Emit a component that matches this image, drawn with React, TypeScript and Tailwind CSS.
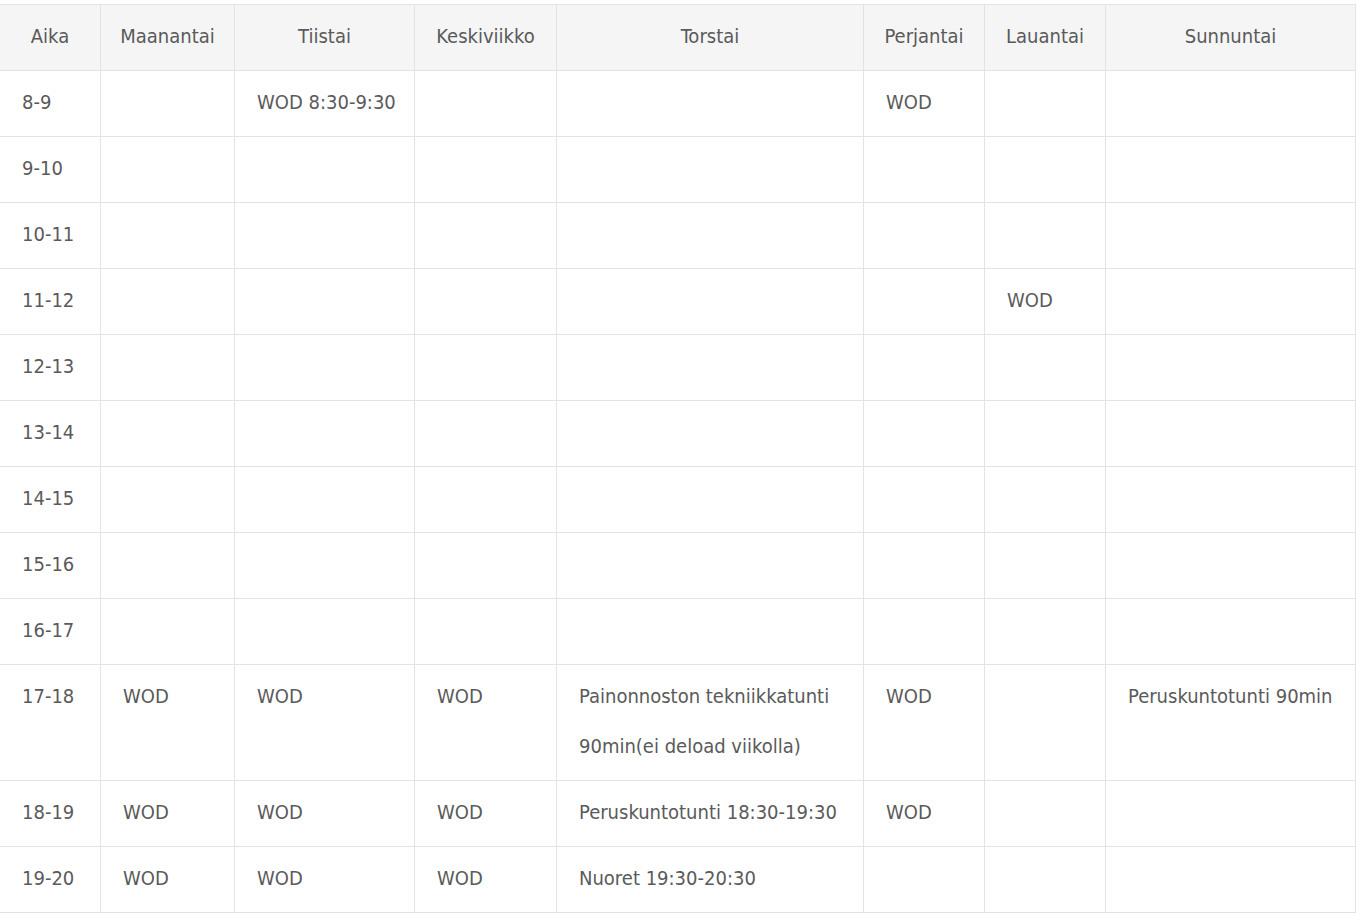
import React from 'react';

const days = ['Maanantai', 'Tiistai', 'Keskiviikko', 'Torstai', 'Perjantai', 'Lauantai', 'Sunnuntai'];

const colWidths = ['w-[101px]', 'w-[134px]', 'w-[180px]', 'w-[142px]', 'w-[307px]', 'w-[121px]', 'w-[121px]', 'w-[250px]'];

const rows: string[][] = [
  ['8-9', '', 'WOD 8:30-9:30', '', '', 'WOD', '', ''],
  ['9-10', '', '', '', '', '', '', ''],
  ['10-11', '', '', '', '', '', '', ''],
  ['11-12', '', '', '', '', '', 'WOD', ''],
  ['12-13', '', '', '', '', '', '', ''],
  ['13-14', '', '', '', '', '', '', ''],
  ['14-15', '', '', '', '', '', '', ''],
  ['15-16', '', '', '', '', '', '', ''],
  ['16-17', '', '', '', '', '', '', ''],
  ['17-18', 'WOD', 'WOD', 'WOD', 'Painonnoston tekniikkatunti 90min(ei deload viikolla)', 'WOD', '', 'Peruskuntotunti 90min'],
  ['18-19', 'WOD', 'WOD', 'WOD', 'Peruskuntotunti 18:30-19:30', 'WOD', '', ''],
  ['19-20', 'WOD', 'WOD', 'WOD', 'Nuoret 19:30-20:30', '', '', ''],
];

export default function App() {
  return (
    <div className="bg-white min-h-screen pt-1 text-[#5a5a5a] font-['DejaVu_Sans_Condensed','DejaVu_Sans',sans-serif]">
      <table className="table-fixed border-collapse w-[1356px] ml-[-1px] text-[20px]">
        <colgroup>
          {colWidths.map((w, i) => (
            <col key={i} className={w} />
          ))}
        </colgroup>
        <thead>
          <tr className="bg-[#f5f5f5]">
            <th className="border border-[#e3e3e6] px-1 pt-[7px] pb-[9px] leading-[49px] font-normal text-center">Aika</th>
            {days.map((d) => (
              <th key={d} className="border border-[#e3e3e6] px-1 pt-[7px] pb-[9px] leading-[49px] font-normal text-center">
                {d}
              </th>
            ))}
          </tr>
        </thead>
        <tbody>
          {rows.map((row, r) => (
            <tr key={r}>
              {row.map((cell, c) => (
                <td key={c} className="border border-[#e3e3e6] pl-[22px] pr-2 pt-[6px] pb-[9px] leading-[50px] align-top text-left">
                  {cell}
                </td>
              ))}
            </tr>
          ))}
        </tbody>
      </table>
    </div>
  );
}
